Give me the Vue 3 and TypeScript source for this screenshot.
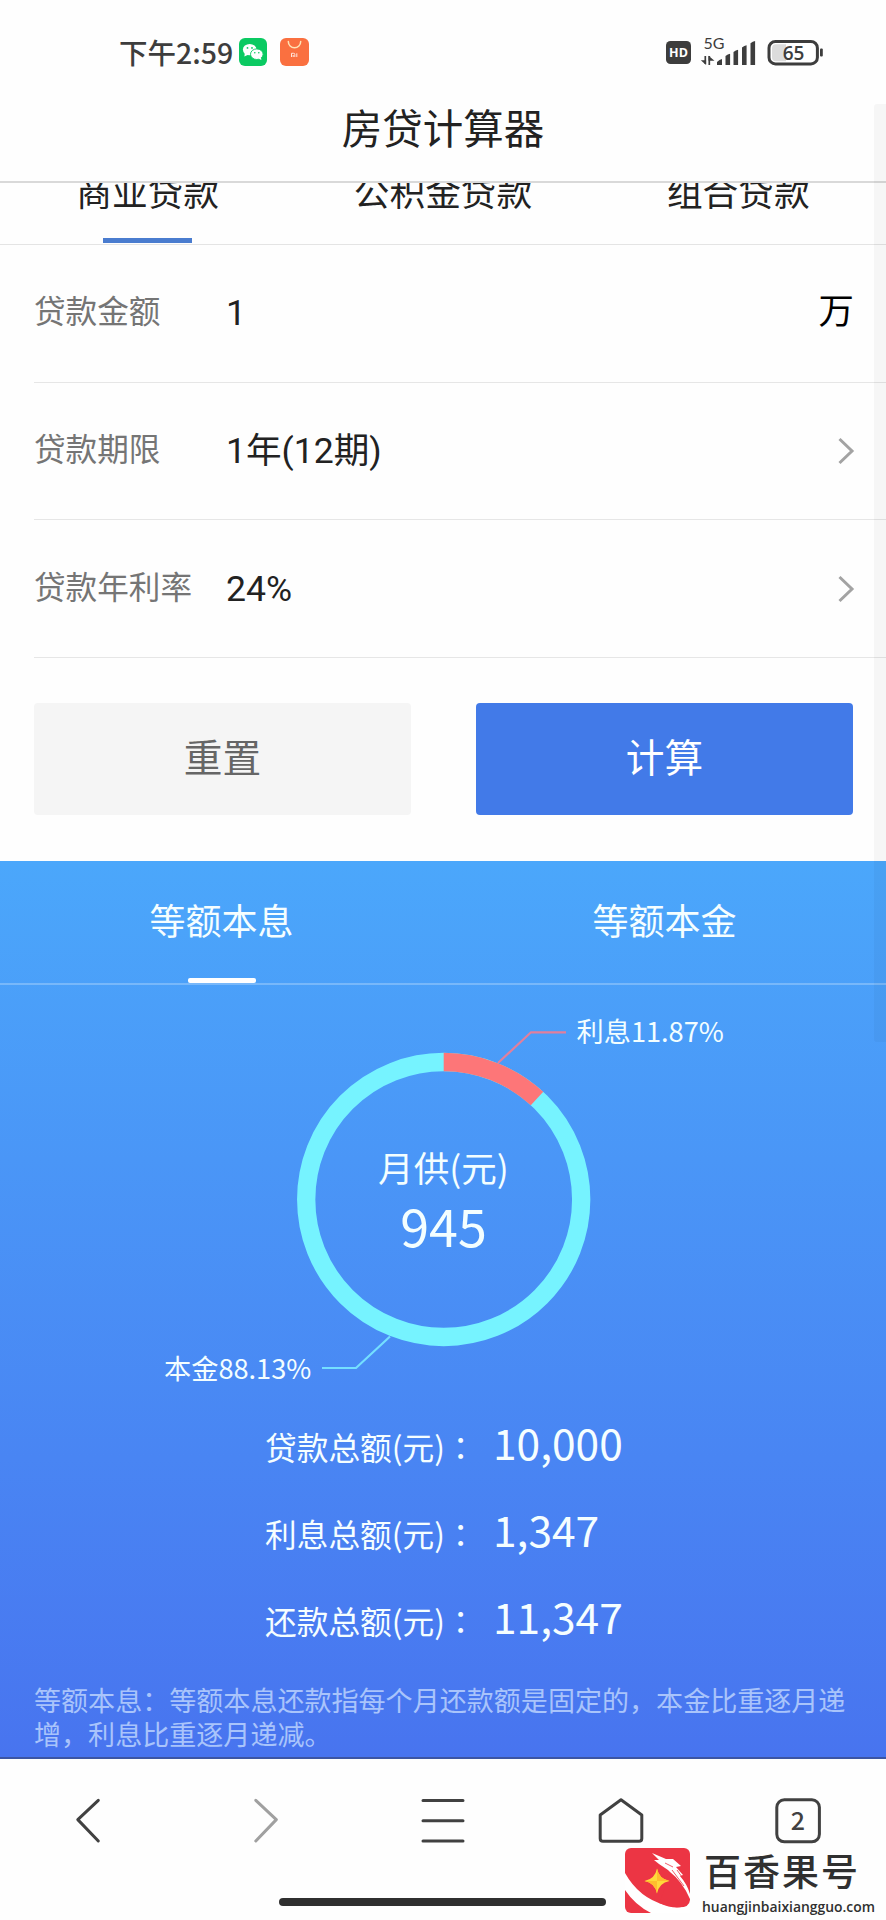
<script setup lang="ts">
import { ref, computed } from 'vue'

interface Field {
  label: string
  value: string
  unit?: string
}

interface Total {
  label: string
  amount: number
}

const loanTabs: string[] = ['商业贷款', '公积金贷款', '组合贷款']
const activeLoan = ref(0)

const methodTabs: string[] = ['等额本息', '等额本金']
const activeMethod = ref(0)

const fields: Field[] = [
  { label: '贷款金额', value: '1', unit: '万' },
  { label: '贷款期限', value: '1年(12期)' },
  { label: '贷款年利率', value: '24%' },
]

const totals: Total[] = [
  { label: '贷款总额(元)', amount: 10000 },
  { label: '利息总额(元)', amount: 1347 },
  { label: '还款总额(元)', amount: 11347 },
]

const monthly = 945
const interestShare = computed(() => (totals[1].amount / totals[2].amount) * 100)
const principalShare = computed(() => 100 - interestShare.value)

const radius = 137.5
const circumference = 2 * Math.PI * radius
const interestDash = computed(
  () => `${(interestShare.value / 100) * circumference} ${circumference}`,
)

const format = (n: number): string => n.toLocaleString('en-US')
</script>

<template>
  <div class="phone">
    <header class="status">
      <span class="clock">下午2:59</span>
      <svg class="app-icon" viewBox="0 0 28 28">
        <rect width="28" height="28" rx="6" fill="#0bca62" />
        <ellipse cx="10.7" cy="11.6" rx="6.8" ry="5.7" fill="#fff" />
        <path d="M5.8 15 5.4 18.6 9.6 16.6Z" fill="#fff" />
        <ellipse cx="17.8" cy="16.2" rx="6.3" ry="5.3" fill="#fff" stroke="#0bca62" stroke-width=".9" />
        <path d="M19.5 20.6 22.4 22 21.9 19.2Z" fill="#fff" />
        <circle cx="8.5" cy="9.9" r=".9" fill="#0bca62" />
        <circle cx="13" cy="9.9" r=".9" fill="#0bca62" />
        <circle cx="15.8" cy="14.8" r=".8" fill="#0bca62" />
        <circle cx="19.8" cy="14.8" r=".8" fill="#0bca62" />
      </svg>
      <svg class="app-icon store" viewBox="0 0 29 28">
        <rect width="29" height="28" rx="6" fill="#fa7040" />
        <path d="M8.3 3.6a6.2 6.2 0 0 0 12.4 0" fill="none" stroke="#ffe3b5" stroke-width="1.5" stroke-linecap="round" />
        <path d="M11.5 19v-3.7h2.2q1.1 0 1.1 1.1V19M13.2 17v2M16.8 15.3V19" fill="none" stroke="#ffe6dc" stroke-width="1" />
      </svg>
      <svg class="signals" viewBox="0 -6 158 46">
        <rect x="1" y="6" width="25" height="23" rx="4.5" fill="#3d3d3d" />
        <text x="13.500" y="22" class="hd">HD</text>
        <text x="38.500" y="13.700" class="net">5G</text>
        <path d="M40.300 21v8M44.300 30v-9" stroke="#3d3d3d" stroke-width="1.700" />
        <path d="M35.800 25.200h5.300v4.800zM43.500 20.800l6 5h-6z" fill="#3d3d3d" />
        <path d="M52 30v-3q2.500-2.500 5-3v6zM60.500 30V21q2.300-1.700 4.600-2.200V30zM68.500 30V17q2.300-1.700 4.600-2.200V30zM77 30V12.500q2.300-1.700 4.600-2.200V30zM85.500 30V8.200q2.300-1.700 4.600-2.200V30z" fill="#3d3d3d" />
        <rect x="104" y="6.500" width="48.400" height="22.400" rx="6.500" fill="#fff" stroke="#3d3d3d" stroke-width="3" />
        <path d="M111 9.200h10v17h-10q-4 0-4-4v-9q0-4 4-4z" fill="#dcdcdc" />
        <text x="128.500" y="24.500" class="battery">65</text>
        <rect x="155" y="13.500" width="2.800" height="8" rx="1" fill="#3d3d3d" />
      </svg>
    </header>

    <h1 class="title">房贷计算器</h1>

    <main class="viewport">
      <nav class="loan-tabs">
        <button
          v-for="(tab, i) in loanTabs"
          :key="tab"
          class="loan-tab"
          :class="{ active: i === activeLoan }"
          @click="activeLoan = i"
        >
          {{ tab }}
        </button>
      </nav>

      <section class="form">
        <div v-for="f in fields" :key="f.label" class="field">
          <span class="label">{{ f.label }}</span>
          <span class="value">{{ f.value }}</span>
          <span v-if="f.unit" class="unit">{{ f.unit }}</span>
          <svg v-else class="chevron" viewBox="0 0 18 28">
            <path d="M2.500 2 15 14 2.500 26" fill="none" stroke="#a3a3a3" stroke-width="3" />
          </svg>
        </div>
      </section>

      <div class="actions">
        <button class="btn reset">重置</button>
        <button class="btn submit">计算</button>
      </div>

      <section class="result">
        <nav class="method-tabs">
          <button
            v-for="(tab, i) in methodTabs"
            :key="tab"
            class="method-tab"
            :class="{ active: i === activeMethod }"
            @click="activeMethod = i"
          >
            {{ tab }}
          </button>
        </nav>

        <svg class="chart" viewBox="0 0 886 415">
          <circle cx="443.700" cy="214.500" :r="radius" fill="none" stroke="#76f3ff" stroke-width="18.300" />
          <circle
            cx="443.700"
            cy="214.500"
            :r="radius"
            fill="none"
            stroke="#fd7678"
            stroke-width="18.300"
            :stroke-dasharray="interestDash"
            transform="rotate(-90 443.700 214.500)"
          />
          <path d="M498 78 531 47.300H566" fill="none" stroke="#e27f9c" stroke-width="2.200" />
          <path d="M390 351.500 356 383H322" fill="none" stroke="#74dfff" stroke-width="2.200" />
          <text x="576.500" y="57" class="share">利息{{ interestShare.toFixed(2) }}%</text>
          <text x="164" y="393.500" class="share">本金{{ principalShare.toFixed(2) }}%</text>
          <text x="443.500" y="197" class="caption">月供(元)</text>
          <text x="443.500" y="261.500" class="monthly">{{ monthly }}</text>
        </svg>

        <dl class="totals">
          <div v-for="t in totals" :key="t.label" class="total">
            <dt>{{ t.label }}<span class="colon">：</span></dt>
            <dd>{{ format(t.amount) }}</dd>
          </div>
        </dl>

        <p class="note">
          等额本息：等额本息还款指每个月还款额是固定的，本金比重逐月递增，利息比重逐月递减。
        </p>
      </section>
    </main>

    <footer class="toolbar">
      <svg viewBox="0 0 50 50"><path d="M35.300 5.300 14.800 24.600 35.300 46" /></svg>
      <svg class="muted" viewBox="0 0 50 50"><path d="M14.800 5.300 35.300 24.600 14.800 46" /></svg>
      <svg viewBox="0 0 50 50"><path d="M5 5.500H45M5 25.700H45M5 46H45" /></svg>
      <svg viewBox="0 0 50 50"><path d="M25 4.800 45.800 20V43.500Q45.800 46.300 43 46.300H7Q4.200 46.300 4.200 43.500V20Z" /></svg>
      <svg viewBox="0 0 50 50">
        <rect x="3.800" y="4.800" width="42.600" height="42" rx="7.500" />
        <text x="25" y="34.500" class="count">2</text>
      </svg>
    </footer>

    <div class="home-indicator"></div>
    <div class="scrollbar"></div>

    <div class="brand">
      <svg class="brand-logo" viewBox="0 0 65 65">
        <rect width="65" height="65" rx="6" fill="#ec3544" />
        <path d="M0 25Q14 50 40 57T65 50V65H26Q10 57 0 42Z" fill="#fff" />
        <path d="M64 40Q67 59.500 52 59.500 44 59.500 34 55L40 40Z" fill="#ec3544" />
        <path d="M27 5 41 11 48 11 56 18 51 19 58 27 55 28Q62 36 65 46V51Q57 33 45 24L43 22 34 16 29 12 34 12Z" fill="#fff" />
        <path d="M47 22 59 38M52 22 62 36M40 15l8 4" stroke="#ec3544" stroke-width=".8" fill="none" />
        <path d="M32 20.500Q34 31 44.500 33 34 35 32 45.500 30 35 19.500 33 30 31 32 20.500Z" fill="#ffd93b" />
        <path d="M32 20.500V33L44.500 33Q34 31 32 20.500ZM32 45.500V33L19.500 33Q30 35 32 45.500Z" fill="#ffbd2e" />
      </svg>
      <div class="brand-text">
        <span class="brand-name">百香果号</span>
        <span class="brand-url">huangjinbaixiangguo.com</span>
      </div>
    </div>
  </div>
</template>

<style>
body {
  margin: 0;
}
</style>

<style scoped>
.phone {
  position: relative;
  display: flex;
  flex-direction: column;
  width: 886px;
  height: 1920px;
  overflow: hidden;
  background: #fefefe;
  color: #222;
  font-family: "Noto Sans CJK SC", sans-serif;
}

button {
  padding: 0;
  border: 0;
  background: none;
  color: inherit;
  font: inherit;
}

.status {
  display: flex;
  align-items: center;
  flex: none;
  height: 104px;
  padding: 0 63px 0 119px;
  box-sizing: border-box;
}

.clock {
  font-size: 28.500px;
  line-height: 40px;
  color: #3d3d3d;
  font-weight: 500;
  width: 120px;
  white-space: nowrap;
}

.app-icon {
  width: 28px;
  height: 28px;
}

.store {
  width: 29px;
  margin-left: 13px;
}

.signals {
  width: 158px;
  height: 46px;
  margin-left: auto;
}

.hd {
  font: 700 12.500px "Open Sans", sans-serif;
  fill: #fff;
  text-anchor: middle;
}

.net {
  font: 400 16px Lato, sans-serif;
  fill: #3d3d3d;
}

.battery {
  font: 600 19px "Open Sans", sans-serif;
  fill: #3d3d3d;
  text-anchor: middle;
}

.title {
  flex: none;
  height: 77px;
  margin: 0;
  border-bottom: 2px solid #d9d9d9;
  font-size: 40.500px;
  font-weight: 400;
  line-height: 46px;
  text-align: center;
}

.viewport {
  flex: none;
  display: flex;
  flex-direction: column;
  height: 1574px;
  overflow: hidden;
  border-bottom: 2px solid #3c55a3;
}

.loan-tabs {
  display: flex;
  flex: none;
  height: 84px;
  margin-top: -23px;
  border-bottom: 1px solid #e4e4e4;
}

.loan-tab {
  flex: 1;
  display: flex;
  flex-direction: column;
  align-items: center;
  padding-top: 8px;
  font-size: 35.700px;
  line-height: 46px;
}

.loan-tab.active::after {
  content: "";
  width: 89px;
  height: 5px;
  margin-top: 24px;
  background: #4a7ccf;
}

.form {
  padding-left: 34px;
}

.field {
  display: flex;
  align-items: center;
  height: 136.700px;
  border-bottom: 1px solid #e6e6e6;
  padding-right: 31px;
}

.label {
  width: 192px;
  padding-bottom: 8px;
  font-size: 31.600px;
  line-height: 46px;
  color: #757575;
}

.value {
  font-family: Roboto, "Noto Sans CJK SC", sans-serif;
  font-size: 35.600px;
  line-height: 46px;
}

.unit {
  margin-left: auto;
  margin-right: 1px;
  padding-bottom: 8px;
  font-size: 35.400px;
  line-height: 46px;
  color: #000;
}

.chevron {
  width: 18px;
  height: 28px;
  margin-left: auto;
}

.actions {
  display: flex;
  gap: 65px;
  padding: 45px 33px 46px 34px;
}

.btn {
  flex: 1;
  height: 112px;
  padding-bottom: 8px;
  border-radius: 4px;
  font-size: 38.700px;
  line-height: 104px;
}

.reset {
  background: #f5f5f5;
  color: #666;
}

.submit {
  background: #427ae8;
  color: #fff;
}

.result {
  flex: none;
  height: 896px;
  background: linear-gradient(#4ba7fb, #4874ef);
  color: #f5feff;
}

.method-tabs {
  display: flex;
  height: 122px;
  border-bottom: 2px solid rgba(255, 255, 255, 0.25);
}

.method-tab {
  flex: 1;
  display: flex;
  flex-direction: column;
  align-items: center;
  padding-top: 32px;
  font-size: 36px;
  line-height: 52px;
}

.method-tab.active::after {
  content: "";
  width: 68px;
  height: 5px;
  margin-top: 33px;
  border-radius: 2px;
  background: #fff;
}

.chart {
  display: block;
  width: 886px;
  height: 415px;
}

.chart text {
  fill: #f3feff;
}

.share {
  font-size: 27.200px;
}

.caption {
  font-size: 35.600px;
  text-anchor: middle;
}

.monthly {
  font-size: 52px;
  text-anchor: middle;
}

.totals {
  margin: -2px 0 0;
  padding-left: 265px;
}

.total {
  display: flex;
  align-items: baseline;
  height: 87px;
}

dt {
  width: 228px;
  font-size: 31.700px;
  white-space: nowrap;
}

.colon {
  font-family: "Noto Sans CJK TC", sans-serif;
}

dd {
  margin: 0;
  font-size: 42.500px;
  line-height: 87px;
}

.note {
  width: 820px;
  margin: 24px 0 0 34px;
  font-size: 27.060px;
  line-height: 33.600px;
  color: #a9c4fb;
}

.toolbar {
  display: flex;
  justify-content: space-between;
  padding: 36px 63px 0 63px;
}

.toolbar svg {
  width: 50px;
  height: 50px;
  fill: none;
  stroke: #414141;
  stroke-width: 3;
  stroke-linecap: round;
  stroke-linejoin: round;
}

.toolbar .muted {
  stroke: #a0a0a0;
}

.toolbar .count {
  font: 500 25px "Noto Sans CJK SC", sans-serif;
  fill: #414141;
  stroke: none;
  text-anchor: middle;
}

.home-indicator {
  position: absolute;
  left: 279px;
  bottom: 14px;
  width: 327px;
  height: 8px;
  border-radius: 4px;
  background: #2f2f2f;
}

.scrollbar {
  position: absolute;
  top: 104px;
  right: 0;
  width: 12px;
  height: 938px;
  border-radius: 3px 0 0 3px;
  background: rgba(0, 0, 0, 0.03);
}

.brand {
  position: absolute;
  left: 625px;
  top: 1848px;
  display: flex;
}

.brand-logo {
  width: 65px;
  height: 65px;
}

.brand-text {
  display: flex;
  flex-direction: column;
  margin-left: 12px;
}

.brand-name {
  margin-left: 2px;
  padding-bottom: 6px;
  font-size: 37px;
  line-height: 45px;
  letter-spacing: 2px;
  color: #303030;
  font-weight: 500;
}

.brand-url {
  font: 600 13.900px/16px "Open Sans", sans-serif;
  color: #303030;
}
</style>
